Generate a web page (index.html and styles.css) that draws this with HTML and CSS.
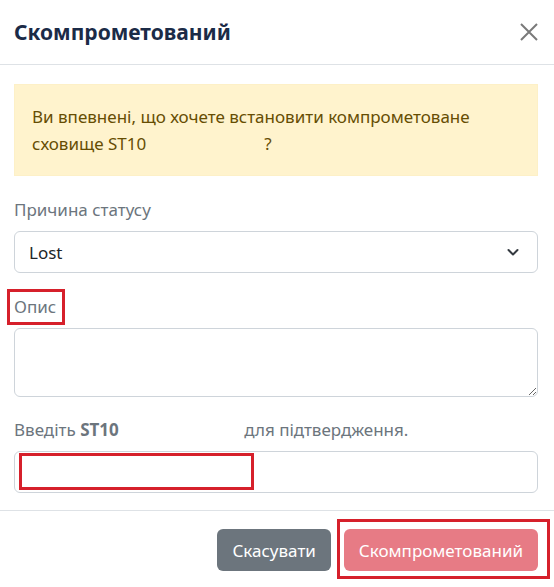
FILE: index.html
```html
<!DOCTYPE html>
<html lang="uk">
<head>
<meta charset="utf-8">
<title>Скомпрометований</title>
<link rel="stylesheet" href="styles.css">
</head>
<body>
<div class="modal">
  <header class="modal-header">
    <h5 class="modal-title">Скомпрометований</h5>
    <button class="btn-close" type="button" aria-label="Close">
      <svg width="18" height="18" viewBox="0 0 18 18"><path d="M1 1 L17 17 M17 1 L1 17" stroke="#7a7a7a" stroke-width="2" fill="none"/></svg>
    </button>
  </header>
  <div class="modal-body">
    <div class="alert">Ви впевнені, що хочете встановити компрометоване сховище ST10<span class="redact r-alert"></span>?</div>
    <div class="field">
      <label class="form-label">Причина статусу</label>
      <div class="form-select">
        <span>Lost</span>
        <svg class="chevron" width="16" height="16" viewBox="0 0 16 16"><path d="M3.5 6 L8 10.5 L12.5 6" stroke="#343a40" stroke-width="2" fill="none" stroke-linecap="round" stroke-linejoin="round"/></svg>
      </div>
    </div>
    <div class="field">
      <label class="form-label marked">Опис</label>
      <textarea class="form-control textarea"></textarea>
    </div>
    <div class="field">
      <label class="form-label">Введіть <b>ST10</b><span class="redact r-label"></span> для підтвердження.</label>
      <div class="form-control input"><span class="mark-box"></span></div>
    </div>
  </div>
  <footer class="modal-footer">
    <button class="btn btn-secondary" type="button">Скасувати</button>
    <button class="btn btn-danger marked-btn" type="button">Скомпрометований</button>
  </footer>
</div>
</body>
</html>
```

FILE: styles.css
```css
html, body {
  margin: 0;
  padding: 0;
  background: #fff;
}
body {
  font-family: "Noto Sans", "Open Sans", sans-serif;
  font-size: 17px;
  color: #212529;
}
.modal {
  width: 554px;
  height: 587px;
  display: flex;
  flex-direction: column;
  overflow: hidden;
}
.modal-header {
  height: 65px;
  border-bottom: 1px solid #dee2e6;
  display: flex;
  align-items: center;
  justify-content: space-between;
  padding: 0 16px 0 14px;
  box-sizing: border-box;
}
.modal-title {
  margin: 0;
  font-size: 21px;
  font-weight: 700;
  color: #1b2b47;
  line-height: 26px;
}
.btn-close {
  border: 0;
  background: transparent;
  padding: 0;
  width: 18px;
  height: 18px;
  display: flex;
}
.modal-body {
  padding: 19px 16px 17px 14px;
}
.alert {
  background: #fff3cd;
  border: 1px solid #fdf0c7;
  color: #664d03;
  padding: 18px 17px;
  line-height: 27px;
}
.redact {
  display: inline-block;
}
.r-alert { width: 118px; }
.r-label { width: 121px; }
.field {
  margin-top: 21px;
  display: flex;
  flex-direction: column;
}
.field:last-child {
  margin-top: 20px;
}
.form-label {
  color: #6c757d;
  line-height: 25px;
  margin-bottom: 9px;
  align-self: flex-start;
}
.form-label b {
  font-weight: 700;
  color: #6c757d;
}
.marked {
  position: relative;
}
.marked::after {
  content: "";
  position: absolute;
  left: -7px;
  right: -9px;
  top: -5px;
  bottom: -6px;
  border: 3px solid #d6202b;
}
.form-select {
  height: 42px;
  box-sizing: border-box;
  border: 1px solid #ced4da;
  border-radius: 6px;
  display: flex;
  align-items: center;
  justify-content: space-between;
  padding: 0 16px 0 14px;
}
.chevron { display: block; }
.form-control {
  display: block;
  box-sizing: border-box;
  border: 1px solid #ced4da;
  border-radius: 6px;
  width: 100%;
  font: inherit;
  margin: 0;
}
.textarea {
  height: 69px;
  resize: vertical;
}
.input {
  height: 42px;
  position: relative;
}
.mark-box {
  position: absolute;
  left: 4px;
  top: 1px;
  width: 235px;
  height: 37px;
  box-sizing: border-box;
  border: 3px solid #d6202b;
}
.modal-footer {
  border-top: 1px solid #dee2e6;
  display: flex;
  justify-content: flex-end;
  gap: 13px;
  padding: 18px 16px 0 14px;
}
.btn {
  height: 42px;
  border: 0;
  border-radius: 6px;
  padding: 0 15px;
  font-family: inherit;
  font-size: 17px;
  color: #fff;
}
.btn-secondary { background: #6c757d; }
.btn-danger { background: #e77b85; }
.marked-btn { position: relative; }
.marked-btn::after {
  content: "";
  position: absolute;
  left: -7px;
  right: -12px;
  top: -10px;
  bottom: -8px;
  border: 3px solid #d6202b;
}
```
